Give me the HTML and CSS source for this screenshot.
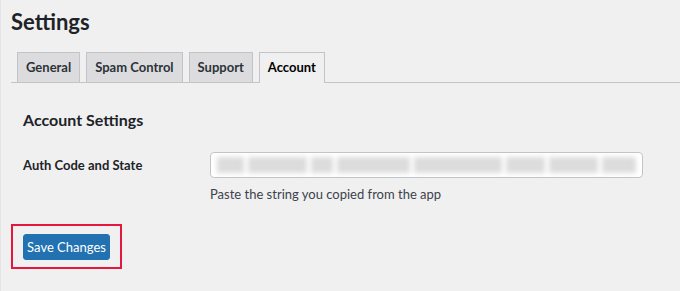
FILE: index.html
```html
<!DOCTYPE html>
<html lang="en">
<head>
  <meta charset="UTF-8" />
  <meta name="viewport" content="width=device-width, initial-scale=1.0" />
  <title>Settings</title>
  <link rel="stylesheet" href="styles.css">
</head>
<body>
  <div class="wrap">
    <h1>Settings</h1>

    <nav class="tabs">
      <a class="tab" href="#">General</a>
      <a class="tab" href="#">Spam Control</a>
      <a class="tab" href="#">Support</a>
      <a class="tab active" href="#">Account</a>
    </nav>

    <div class="panel">
      <h2>Account Settings</h2>

      <div class="field-row">
        <label class="field-label" for="auth">Auth Code and State</label>
        <div class="field-body">
          <div class="code-input" id="auth">
            <span class="blob" style="width: 28px"></span>
            <span class="blob" style="width: 60px"></span>
            <span class="blob" style="width: 22px"></span>
            <span class="blob" style="width: 75px"></span>
            <span class="blob" style="width: 90px"></span>
            <span class="blob" style="width: 40px"></span>
            <span class="blob" style="width: 50px"></span>
            <span class="blob" style="width: 35px"></span>
          </div>
          <p class="description">Paste the string you copied from the app</p>
        </div>
      </div>
    </div>

    <div class="submit-box">
      <button class="button-primary">Save Changes</button>
    </div>
  </div>
</body>
</html>
```

FILE: styles.css
```css
body {
  margin: 0;
  padding: 0;
  background-color: #f0f0f1;
  color: #1d2327;
  font-family: Lato, 'Noto Sans', sans-serif;
  font-size: 13px;
  border-left: 1px solid #e4e4e4;
  min-height: 291px;
  box-sizing: border-box;
}

.wrap {
  padding: 7px 0 0 10px;
}

h1 {
  margin: 0;
  font-size: 22px;
  font-weight: 700;
  line-height: 30px;
}

.tabs {
  display: flex;
  gap: 6px;
  margin-top: 15px;
  padding-left: 6px;
  border-bottom: 1px solid #c3c4c7;
}

.tab {
  display: block;
  padding: 0 8px;
  height: 29px;
  line-height: 29px;
  border: 1px solid #c3c4c7;
  border-bottom: none;
  background: #dcdcde;
  color: #2c3338;
  font-size: 13px;
  font-weight: 700;
  text-decoration: none;
}

.tab.active {
  background: #f0f0f1;
  color: #000;
  height: 30px;
  margin-bottom: -1px;
}

.panel {
  padding-left: 12px;
}

h2 {
  margin: 26px 0 0;
  font-size: 16px;
  font-weight: 700;
  line-height: 22px;
}

.field-row {
  display: flex;
  margin-top: 21px;
}

.field-label {
  width: 187px;
  padding-top: 5px;
  font-weight: 700;
  font-size: 13px;
}

.field-body {
  display: flex;
  flex-direction: column;
}

.code-input {
  display: flex;
  gap: 4px;
  width: 433px;
  height: 26px;
  box-sizing: border-box;
  padding: 4px 6px;
  border: 1px solid #c3c4c7;
  border-radius: 4px;
  background: #fff;
  overflow: hidden;
}

.blob {
  display: block;
  height: 16px;
  background: #dcdcdc;
  filter: blur(2.5px);
}

.description {
  margin: 8px 0 0;
  font-size: 13px;
  color: #3c434a;
}

.submit-box {
  display: inline-block;
  margin-top: 22px;
  padding: 8px 10px 7px 10px;
  border: 2px solid #e5173f;
}

.button-primary {
  display: block;
  width: 87px;
  height: 26px;
  padding: 0;
  border: 1px solid #2271b1;
  border-radius: 3px;
  background: #2271b1;
  color: #fff;
  font-family: Lato, 'Noto Sans', sans-serif;
  font-size: 13px;
  font-weight: 400;
}
```
